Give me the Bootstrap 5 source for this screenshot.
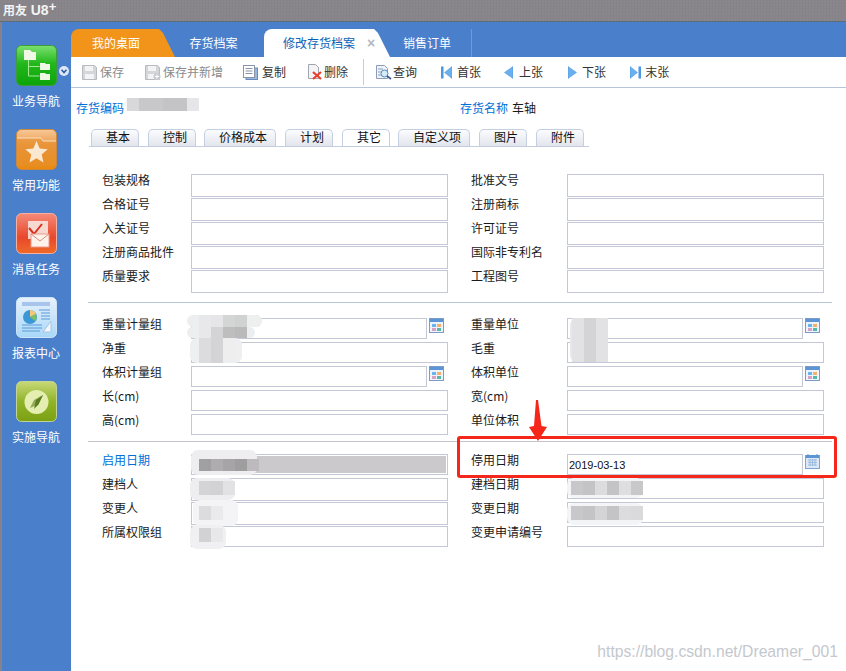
<!DOCTYPE html>
<html lang="zh-CN">
<head>
<meta charset="UTF-8">
<title>用友U8+</title>
<link href="https://cdn.jsdelivr.net/npm/bootstrap@5.3.0/dist/css/bootstrap.min.css" rel="stylesheet">
<style>
html, body { height: 100%; }
body { font: 12px/16px "Noto Sans CJK SC", "Liberation Sans", sans-serif; color: #1a1a1a; background: #fff; overflow: hidden; }
.shell { width: 846px; height: 671px; position: relative; overflow: hidden; }
.titlebar { height: 22px; background: repeating-conic-gradient(#858388 0 25%, #8a888c 0 50%) 0 0 / 3px 3px; border-bottom: 1px solid #5f6a7a; padding-left: 3px; color: #f4f4f4; font-weight: 700; line-height: 20px; white-space: nowrap; }
.titlebar .u8 { font-family: "Liberation Sans", sans-serif; font-size: 14px; margin-left: 1px; }
.titlebar .plus { font-family: "Liberation Sans", sans-serif; font-size: 13px; line-height: 10px; vertical-align: 4px; }
.workarea { height: 649px; border-left: 2px solid #858388; }
.sidebar { width: 69px; background: #4a7fcb; flex: none; padding-top: 23px; }
.navitem { height: 84px; color: #fff; text-align: center; width: 68px; position: relative; }
.navitem svg { display: block; margin: 0 0 7px 14px; }
.navitem span { display: block; }
.navitem svg.expander { position: absolute; left: 57px; top: 21px; margin: 0; }
.mainpane { flex: 1; min-width: 0; }
.tabstrip { height: 35px; background: #4a7fcb; padding-top: 7px; }
.maintab { height: 28px; line-height: 27px; color: #fff; text-align: center; position: relative; flex: none; }
.tab-home { width: 104px; background: #f29419; border-top-left-radius: 8px; clip-path: polygon(0 0, 88px 0, 92px 4px, 104px 100%, 0 100%); padding-right: 14px; }
.tab-a { width: 89px; padding-right: 12px; }
.tab-edit { width: 126px; background: #fff; color: #0a62b8; border-top-left-radius: 8px; clip-path: polygon(0 0, 110px 0, 114px 4px, 126px 100%, 0 100%); text-align: left; padding-left: 19px; }
.tab-edit b { position: absolute; left: 103px; top: 1px; color: #b4b8c0; font: 700 14px/27px "Liberation Sans", sans-serif; }
.tab-b { width: 82px; border-right: 1px solid #6f9ad6; padding-right: 7px; }
.toolstrip { height: 31px; border-bottom: 1px solid #b8c4dc; background: #fff; padding-left: 11px; }
.toolitem { display: flex; align-items: center; color: #333; white-space: nowrap; }
.toolitem.off { color: #8a8a8a; }
.toolsep { width: 1px; height: 26px; background: #c8cdd6; margin-left: 15px; }
.gap1 { gap: 1px; } .gap2 { gap: 2px; } .gap3 { gap: 3px; } .gap4 { gap: 4px; } .gap5 { gap: 5px; } .gap6 { gap: 6px; }
.ml11 { margin-left: 11px; } .ml20 { margin-left: 20px; } .ml21 { margin-left: 21px; } .ml23 { margin-left: 23px; } .ml24 { margin-left: 24px; } .ml25 { margin-left: 25px; }
.headline { height: 41px; padding: 12px 0 0 5px; }
.fieldname { color: #0070d8; }
.codecell { width: 384px; }
.subtabs { height: 18px; margin-left: 18px; width: 500px; border-bottom: 1px solid #c4cde0; padding-left: 2px; }
.subtab { height: 17px; border: 1px solid #c5cfe2; border-bottom: 0; border-radius: 5px 5px 0 0; background: linear-gradient(#fbfcfe, #e2e5ec); text-align: center; line-height: 14px; color: #111; flex: none; padding-left: 6px; margin-left: 9px; width: 48px; }
.subtab:first-child { margin-left: 0; }
.subtab.on { background: #fff; }
.subtab.wide { width: 72px; margin-left: 8px; }
.subtab.wide + .subtab { margin-left: 9px; }
.formbox { padding: 27px 0 0 17px; width: 775px; }
.fieldgrid { padding-left: 14px; display: grid; grid-template-columns: 346px 376px; grid-auto-rows: 24px; }
.fieldrow { display: flex; }
.fieldrow label { flex: none; line-height: 12px; }
.leftcol label { width: 89px; }
.rightcol label { width: 96px; margin-left: 23px; }
.uinput.form-control { width: 257px; height: 21px; min-height: 0; padding: 0 1px; border: 1px solid #c4c8d6; border-radius: 0; font: 11px/16px "Liberation Sans", sans-serif; color: #111; box-shadow: none; background: #fff; }
.tall .uinput.form-control, .uinput.tallbox.form-control { height: 23px; }
.uinput.short.form-control { width: 236px; }
.uinput.disabled.form-control { background: #cbc9cc; outline: 1px solid #fff; outline-offset: -2px; }
.fieldrow svg { margin-left: 2px; flex: none; }
.sepline { height: 1px; background: #b8c6d8; margin: 8px 0 15px; width: 744px; }
.sepline.second { background: #c2c6cc; margin: 3px 0 12px; }
.smudge { position: absolute; filter: blur(.5px); display: flex; border-radius: 7px; }
.smudge i { display: block; width: 12px; height: 100%; flex: none; }
.redbox { position: absolute; left: 457px; top: 436px; width: 380px; height: 42px; border: 3px solid #f5261a; border-radius: 3px; }
.redarrow { position: absolute; left: 529px; top: 400px; }
.watermark { position: absolute; right: 8px; top: 643px; color: #c4c8ce; font: 15.7px/18px "Liberation Sans", sans-serif; }
</style>
</head>
<body>
<div class="shell" id="shell">
  <div class="titlebar">用友 <span class="u8">U8</span><span class="plus">+</span></div>
  <div class="workarea d-flex">
    <div class="sidebar">
      <div class="navitem">
        <svg width="41" height="41" viewBox="0 0 41 41"><defs><linearGradient id="g1" x1="0" y1="0" x2="0" y2="1"><stop offset="0" stop-color="#7ce070"/><stop offset=".45" stop-color="#22b81c"/><stop offset="1" stop-color="#0ca40a"/></linearGradient></defs><rect x=".5" y=".5" width="40" height="40" rx="5" fill="url(#g1)" stroke="#3c9c3c"/><path d="M8 5h6l2 2h4v8H8z" fill="#eef8e4"/><path d="M12.500 15v16h11M12.500 21.500h11" stroke="#a4e894" fill="none"/><path d="M24 18h5l1 1h4v6H24zM24 28h5l1 1h4v6H24z" fill="#eef8e4"/></svg>
        <span>业务导航</span>
        <svg class="expander" width="10" height="10" viewBox="0 0 10 10"><circle cx="5" cy="5" r="5" fill="#dfe8f6"/><path d="M2.500 3.800 5 6.600l2.500-2.800" fill="none" stroke="#2c5fa8" stroke-width="1.600"/></svg>
      </div>
      <div class="navitem">
        <svg width="41" height="41" viewBox="0 0 41 41"><defs><linearGradient id="g2" x1="0" y1="0" x2="0" y2="1"><stop offset="0" stop-color="#f8c898"/><stop offset=".4" stop-color="#ea9a48"/><stop offset="1" stop-color="#e88a10"/></linearGradient></defs><rect x=".5" y=".5" width="40" height="40" rx="5" fill="url(#g2)" stroke="#c88840"/><path d="M1 9h24l2 3h13v-3 28H1z" fill="#e88e2c" opacity=".55"/><path d="M1 9h24l2 3h13" fill="none" stroke="#fbe0c4"/><path d="M20.500 12l3.200 7.500 8 .7-6 5.300 1.800 8-7-4.200-7 4.200 1.800-8-6-5.300 8-.7z" fill="#fbe8d0"/></svg>
        <span>常用功能</span>
      </div>
      <div class="navitem">
        <svg width="41" height="41" viewBox="0 0 41 41"><defs><linearGradient id="g3" x1="0" y1="0" x2="0" y2="1"><stop offset="0" stop-color="#f48a78"/><stop offset=".6" stop-color="#e8482c"/><stop offset="1" stop-color="#f06a28"/></linearGradient></defs><rect x=".5" y=".5" width="40" height="40" rx="5" fill="url(#g3)" stroke="#f4b0a0"/><rect x="12" y="8" width="20" height="18" fill="#f6d8d0"/><path d="M13 15l5 6 8-10" fill="none" stroke="#d8301c" stroke-width="2"/><rect x="15" y="21" width="18" height="13" fill="#fdf2ec" stroke="#e89c88"/><path d="M15 21l9 7 9-7" fill="none" stroke="#e08a78"/></svg>
        <span>消息任务</span>
      </div>
      <div class="navitem">
        <svg width="41" height="41" viewBox="0 0 41 41"><defs><linearGradient id="g4" x1="0" y1="0" x2="0" y2="1"><stop offset="0" stop-color="#e8f2fc"/><stop offset="1" stop-color="#a8d8f8"/></linearGradient></defs><rect x=".5" y=".5" width="40" height="40" rx="5" fill="url(#g4)" stroke="#cfe4f8"/><rect x="6" y="5" width="28" height="4" fill="#a8c4ec"/><path d="M23 13h11M25 16h9M25 19h9M25 22h9M6 28h20M6 31h20M6 34h18" stroke="#5a9ad8"/><circle cx="14" cy="20" r="7" fill="#3a98d8"/><path d="M14 20v-7a7 7 0 0 1 6 4z" fill="#f4c878"/><path d="M14 20l6-3a7 7 0 0 1-1 7z" fill="#7cc060"/><path d="M35 24v11H27z" fill="#f2f6fb" stroke="#a8c4e4"/></svg>
        <span>报表中心</span>
      </div>
      <div class="navitem">
        <svg width="41" height="41" viewBox="0 0 41 41"><defs><linearGradient id="g5" x1="0" y1="0" x2="0" y2="1"><stop offset="0" stop-color="#c8d878"/><stop offset=".5" stop-color="#90b428"/><stop offset="1" stop-color="#7ca014"/></linearGradient></defs><rect x=".5" y=".5" width="40" height="40" rx="5" fill="url(#g5)" stroke="#c0d498"/><circle cx="20.500" cy="21" r="12" fill="#e4eeb0"/><path d="M27 14l-4.500 9.500-4.500 4.500 2-9z" fill="#5c7c20"/><path d="M27 14l-9 5-4 8 8-3.500z" fill="#5c7c20" opacity=".6"/></svg>
        <span>实施导航</span>
      </div>
    </div>
    <div class="mainpane">
      <div class="tabstrip d-flex">
        <div class="maintab tab-home">我的桌面</div>
        <div class="maintab tab-a">存货档案</div>
        <div class="maintab tab-edit">修改存货档案<b>×</b></div>
        <div class="maintab tab-b">销售订单</div>
      </div>
      <div class="toolstrip d-flex align-items-center">
        <div class="toolitem off gap3"><svg width="15" height="15" viewBox="0 0 15 15"><path d="M.5.500h12l2 2v12H.500z" fill="#d4d6da" stroke="#b8bac0"/><rect x="3" y="1" width="8" height="5" fill="#f4f4f6"/><rect x="3" y="9" width="9" height="5" fill="#f4f4f6"/></svg>保存</div>
        <div class="toolitem off gap2 ml21"><svg width="16" height="15" viewBox="0 0 16 15"><path d="M.5.500h12l2 2v12H.500z" fill="#d4d6da" stroke="#b8bac0"/><rect x="3" y="1" width="8" height="5" fill="#f4f4f6"/><rect x="3" y="9" width="9" height="5" fill="#f4f4f6"/><circle cx="12" cy="11.500" r="3.500" fill="#c8cad0"/><path d="M12 9.500v4M10 11.500h4" stroke="#fff"/></svg>保存并新增</div>
        <div class="toolitem gap4 ml20"><svg width="15" height="15" viewBox="0 0 15 15"><rect x="3" y="3" width="11.500" height="11.500" fill="#9ab8de" stroke="#6a8cc0"/><rect x=".5" y=".5" width="11" height="12" fill="#fff" stroke="#8a94a8"/><path d="M2.500 3.500h7M2.500 6h7M2.500 8.500h7" stroke="#8a94a8"/></svg>复制</div>
        <div class="toolitem gap2 ml21"><svg width="15" height="16" viewBox="0 0 15 16"><path d="M1.500.500h7l3 3v11h-10z" fill="#f4f4f6" stroke="#a0a4ac"/><path d="M6 8l8 7M14 8l-8 7" stroke="#e8402c" stroke-width="2.200"/></svg>删除</div>
        <div class="toolsep"></div>
        <div class="toolitem gap1 ml11"><svg width="17" height="16" viewBox="0 0 17 16"><path d="M1.500 1.500h8l3 3v10h-11z" fill="#f0f4fa" stroke="#8a9cb8"/><path d="M3 5h5M3 8h3M3 11h3" stroke="#8a9cb8"/><circle cx="9.500" cy="9.500" r="3.500" fill="#d4ecfa" stroke="#5a88b8"/><path d="M12 12l4 3" stroke="#3a5a88" stroke-width="1.600"/></svg>查询</div>
        <div class="toolitem gap5 ml24"><svg width="11" height="13" viewBox="0 0 11 13"><rect y=".5" width="2.500" height="12" fill="#4a98e0"/><path d="M11 .500v12L3.500 6.500z" fill="#6ab0ee" stroke="#4a90d8" stroke-width=".5"/></svg>首张</div>
        <div class="toolitem gap6 ml23"><svg width="9" height="13" viewBox="0 0 9 13"><path d="M9 .500v12L.5 6.500z" fill="#6ab0ee" stroke="#4a90d8" stroke-width=".5"/></svg>上张</div>
        <div class="toolitem gap5 ml25"><svg width="9" height="13" viewBox="0 0 9 13"><path d="M0 .500v12l8.500-6z" fill="#6ab0ee" stroke="#4a90d8" stroke-width=".5"/></svg>下张</div>
        <div class="toolitem gap4 ml24"><svg width="11" height="13" viewBox="0 0 11 13"><path d="M0 .500v12l7.500-6z" fill="#6ab0ee" stroke="#4a90d8" stroke-width=".5"/><rect x="8.500" y=".5" width="2.500" height="12" fill="#4a98e0"/></svg>末张</div>
      </div>
      <div class="headline d-flex">
        <span class="fieldname codecell">存货编码</span>
        <span><span class="fieldname me-1">存货名称</span>车轴</span>
      </div>
      <div class="subtabs d-flex">
        <div class="subtab">基本</div>
        <div class="subtab">控制</div>
        <div class="subtab wide">价格成本</div>
        <div class="subtab">计划</div>
        <div class="subtab on">其它</div>
        <div class="subtab wide">自定义项</div>
        <div class="subtab">图片</div>
        <div class="subtab">附件</div>
      </div>
      <div class="formbox">
        <div class="fieldgrid tall" id="group1"></div>
        <div class="sepline"></div>
        <div class="fieldgrid" id="group2"></div>
        <div class="sepline second"></div>
        <div class="fieldgrid" id="group3"></div>
      </div>
    </div>
  </div>

  <div class="redbox"></div>
  <svg class="redarrow" width="18" height="42" viewBox="0 0 18 42"><path d="M7 0h2l3.500 26 5.500 1-9 14-9-14 5-1z" fill="#f5261a"/></svg>
  <div class="watermark">https://blog.csdn.net/Dreamer_001</div>
</div>

<script>
    const calendarIcon = '<svg width="15" height="16" viewBox="0 0 15 16"><rect x=".5" y=".5" width="14" height="14" fill="#eef2fa" stroke="#7c9cc8"/><rect x="1" y="1" width="13" height="3" fill="#5c94d4"/><rect x="3" y="6" width="4" height="3" fill="#6ab4ee"/><rect x="8" y="6" width="4" height="3" fill="#f4b070"/><rect x="3" y="10" width="4" height="3" fill="#d8a0c4"/><rect x="8" y="10" width="4" height="3" fill="#58b8a8"/></svg>';
    const dateIcon = '<svg width="15" height="16" viewBox="0 0 15 16"><rect x=".5" y="1.500" width="14" height="13" fill="#dce8f6" stroke="#7ca4d0"/><rect x="1" y="1" width="13" height="3" fill="#5c94d4"/><path d="M3 0v2M12 0v2" stroke="#5c94d4"/><path d="M3 6h9M3 8.500h9M3 11h9M5 5v7M7.500 5v7M10 5v7" stroke="#9cbcdc"/></svg>';

    function renderGroup(id, rows) {
        const grid = document.getElementById(id);
        rows.forEach(function (r) {
            const side = r.right ? 'rightcol' : 'leftcol';
            const cls = (r.icon ? ' short' : '') + (r.disabled ? ' disabled' : '') + (r.tall ? ' tallbox' : '');
            const labelClass = r.blue ? ' class="fieldname"' : '';
            grid.innerHTML += '<div class="fieldrow ' + side + '"><label' + labelClass + '>' + r.label + '</label>' +
                '<input class="form-control uinput' + cls + '" value="' + (r.value || '') + '">' + (r.icon || '') + '</div>';
        });
    }

    renderGroup('group1', [
        { label: '包装规格' }, { label: '批准文号', right: true },
        { label: '合格证号' }, { label: '注册商标', right: true },
        { label: '入关证号' }, { label: '许可证号', right: true },
        { label: '注册商品批件' }, { label: '国际非专利名', right: true },
        { label: '质量要求' }, { label: '工程图号', right: true }
    ]);
    renderGroup('group2', [
        { label: '重量计量组', icon: calendarIcon }, { label: '重量单位', right: true, icon: calendarIcon },
        { label: '净重' }, { label: '毛重', right: true },
        { label: '体积计量组', icon: calendarIcon }, { label: '体积单位', right: true, icon: calendarIcon },
        { label: '长(cm)' }, { label: '宽(cm)', right: true },
        { label: '高(cm)' }, { label: '单位体积', right: true }
    ]);
    renderGroup('group3', [
        { label: '启用日期', blue: true, disabled: true }, { label: '停用日期', right: true, icon: dateIcon, value: '2019-03-13' },
        { label: '建档人', tall: true }, { label: '建档日期', right: true },
        { label: '变更人', tall: true }, { label: '变更日期', right: true },
        { label: '所属权限组' }, { label: '变更申请编号', right: true }
    ]);

    // mosaic patches that hide private values: [x, y, w, h, cellTop, cellHeight, cellLeft, bg, cell colours]
    const patches = [
        [124, 98, 75, 13, 0, 13, 3, '#f8f8fa', ['#d8d8da', '#c8c8ca', '#c8c8ca', '#c4c4c6', '#c4c4c6', '#e6e6e8']],
        [187, 315, 75, 12, 0, 12, 12, '#eceef0', ['#e8e8ea', '#e6e6e8', '#d4d5d5', '#d0d1d1', '#eef0f0']],
        [187, 327, 68, 11, 0, 11, 12, '#eceef0', ['#e8e8ea', '#d4d4d6', '#bebebe', '#bababa']],
        [190, 338, 52, 25, 0, 25, 9, '#eeeff0', ['#dcdcde', '#d4d4d6', '#eeeeef']],
        [570, 318, 38, 44, 0, 44, 2, '#e8e8ea', ['#e2e2e4', '#d4d4d6', '#e2e2e4']],
        [191, 450, 66, 25, 9, 12, 8, '#eeeef0', ['#a0a0a2', '#aeacae', '#a6a4a6', '#9e9e9f', '#bcbabc']],
        [190, 478, 45, 22, 3, 14, 9, '#eeeef0', ['#d4d4d6', '#d2d2d4', '#e2e2e4']],
        [193, 500, 45, 26, 6, 14, 6, '#f4f4f6', ['#dcdcde', '#eaeaec']],
        [190, 525, 36, 24, 3, 14, 9, '#f0f0f2', ['#d2d2d4', '#e8e8ea']],
        [567, 478, 76, 20, 3, 14, 4, '#f3f4f6', ['#c8c8ca', '#c4c4c6', '#dcdcde', '#c4c4c6', '#dedee0', '#c8c8ca']],
        [567, 503, 76, 22, 3, 14, 4, '#f3f4f6', ['#c8c8ca', '#c4c4c6', '#d4d4d6', '#c4c4c6', '#dcdcde', '#dadadc']]
    ];
    const shell = document.getElementById('shell');
    const firstOverlay = shell.querySelector('.redbox');
    patches.forEach(function (p) {
        const el = document.createElement('div');
        el.className = 'smudge';
        el.style.cssText = 'left:' + p[0] + 'px;top:' + p[1] + 'px;width:' + p[2] + 'px;height:' + p[3] + 'px;padding:' + p[4] + 'px 0 ' + (p[3] - p[4] - p[5]) + 'px ' + p[6] + 'px;background:' + p[7];
        p[8].forEach(function (c) {
            const cell = document.createElement('i');
            cell.style.background = c;
            el.appendChild(cell);
        });
        shell.insertBefore(el, firstOverlay);
    });
</script>
<script src="https://cdn.jsdelivr.net/npm/bootstrap@5.3.0/dist/js/bootstrap.bundle.min.js"></script>
</body>
</html>
